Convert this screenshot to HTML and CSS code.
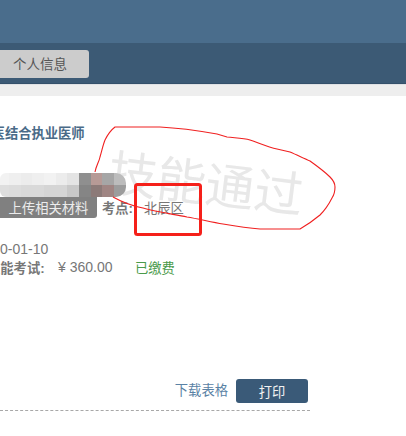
FILE: index.html
```html
<!DOCTYPE html>
<html lang="zh">
<head>
<meta charset="utf-8">
<title>个人信息</title>
<link rel="stylesheet" href="styles.css">
</head>
<body>
<header class="top"></header>
<nav class="nav"><span class="tab">个人信息</span></nav>
<div class="band"></div>
<main class="content">
  <h2 class="title">中西医结合执业医师</h2>
  <div class="mosaic">
    <i class="a1 tl"></i><i class="a2"></i><i class="a3"></i><i class="a2"></i><i class="a1"></i><i class="a3"></i><i class="a4"></i><i class="a5"></i><i class="a6"></i><i class="a7"></i><i class="a8 tr"></i>
    <i class="b1 bl"></i><i class="b2"></i><i class="b3"></i><i class="b3"></i><i class="b4"></i><i class="b4"></i><i class="b5"></i><i class="b6"></i><i class="b7"></i><i class="b8"></i><i class="b9 br"></i>
  </div>
  <div class="row-site">
    <span class="upload">上传相关材料</span>
    <span class="label">考点:</span>
    <span class="site">北辰区</span>
  </div>
  <div class="date">2020-01-10</div>
  <div class="row-fee">
    <span class="label fee-name">技能考试:</span>
    <span class="price">¥ 360.00</span>
    <span class="paid">已缴费</span>
  </div>
  <div class="actions">
    <a class="download">下载表格</a>
    <button class="print">打印</button>
  </div>
</main>
<div class="stamp">技能通过</div>
<svg class="marks" width="406" height="436" viewBox="0 0 406 436" fill="none">
  <path class="curve" d="M95 172 C96 166 99 162 100 157 C102 150 103 145 105 140 C108 134 111 130 115 127 L160 127 C180 128 200 131 217 134 L227 137 C235 138 243 138 250 140 C259 143 268 147 277 149 L290 152 C297 155 303 158 310 161 C317 166 324 171 330 177 C333 180 335 184 335 187 C335 191 334 195 332 198 C329 204 325 210 320 215 C314 220 307 225 300 229 L260 229 C248 228 235 226 223 224 C211 222 199 219 187 217 C172 214 157 212 143 208 C132 206 122 202 113 197"/>
  <rect class="box" x="135.5" y="184.5" width="65" height="50" rx="2"/>
</svg>
</body>
</html>
```
FILE: styles.css
```css
* { box-sizing: border-box; }
html, body { margin: 0; height: 100%; overflow: hidden; background: #fff; }
body { position: relative; width: 406px; height: 436px; font-family: "Liberation Sans", "Noto Sans CJK SC", sans-serif; font-size: 13px; color: #666; }
.top { height: 43px; background: #4a6d8c; }
.nav { height: 41px; padding-top: 7px; background: #3c5a75; border-bottom: 1px solid #34506a; }
.tab { display: flex; align-items: center; justify-content: flex-end; width: 89px; height: 28px; padding: 0 22px 2px 0; background: #cccccc; border-radius: 0 3px 3px 0; color: #555; font-size: 13.5px; }
.band { height: 12px; background: #eeeeee; border-top: 1px solid #dfe1e4; }
.content { width: 310px; height: 315px; padding-top: 28px; border-bottom: 1px dashed #a8a8a8; }
.title { height: 19px; margin: 0 0 0 -35px; font-size: 13.3px; line-height: 19px; font-weight: bold; color: #4a6b88; white-space: nowrap; }
.mosaic { position: relative; z-index: 1; display: grid; grid-template-columns: 9.65px repeat(10, 11.65px); grid-auto-rows: 12px; width: 126.5px; margin: 30px 0 0 -0.5px; }
.mosaic i { display: block; }
.a1 { background: #f2f2f2; } .a2 { background: #efefef; } .a3 { background: #ececec; } .a4 { background: #e4e4e4; }
.a5 { background: #8f8f8f; } .a6 { background: #b79a96; } .a7 { background: #a6a6a6; } .a8 { background: #bcbcbc; }
.b1 { background: #dedede; } .b2 { background: #dcdcdc; } .b3 { background: #d9d9d9; } .b4 { background: #d5d5d5; }
.b5 { background: #c8c8c8; } .b6 { background: #858585; } .b7 { background: #8c7a78; } .b8 { background: #a08583; } .b9 { background: #9c9c9c; }
.tl { border-radius: 6px 0 0 0; } .bl { border-radius: 0 0 0 6px; }
.tr { border-radius: 0 10px 0 0; } .br { border-radius: 0 0 10px 0; }
.row-site { display: flex; align-items: center; height: 21px; }
.upload { display: flex; align-items: center; justify-content: center; width: 97px; height: 21px; background: #808080; border-radius: 0 0 3px 0; color: #ececec; font-size: 13.3px; }
.label { font-weight: bold; color: #777; font-size: 13.3px; }
.row-site .label { margin-left: 5px; }
.site { margin-left: 11px; color: #777; font-size: 13.3px; }
.date { height: 18px; margin: 22px 0 0 -23.4px; font-size: 14px; line-height: 18px; color: #777; }
.row-fee { display: flex; align-items: center; height: 20px; margin: -1px 0 0 -13px; white-space: nowrap; }
.fee-name { width: 71px; }
.price { width: 77px; color: #777; font-size: 14px; }
.paid { color: #4a9a4a; font-size: 13.3px; }
.actions { display: flex; align-items: center; justify-content: flex-end; gap: 8px; height: 24px; margin: 102px 2px 0 0; }
.download { margin-bottom: 3px; color: #5a82a5; font-size: 13.3px; }
.print { width: 72px; height: 24px; padding: 0; border: 0; border-radius: 3px; background: #3a5a78; color: #f2f2f2; font: 13.3px "Liberation Sans", "Noto Sans CJK SC", sans-serif; }
.stamp { position: absolute; left: 112px; top: 143px; font-size: 49px; line-height: 60px; color: #e8e8e8; white-space: nowrap; transform: rotate(7deg); transform-origin: left top; }
.marks { position: absolute; left: 0; top: 0; z-index: 2; pointer-events: none; }
.curve { stroke: #f02020; stroke-width: 1.1; }
.box { stroke: #f5201a; stroke-width: 3; }
```
